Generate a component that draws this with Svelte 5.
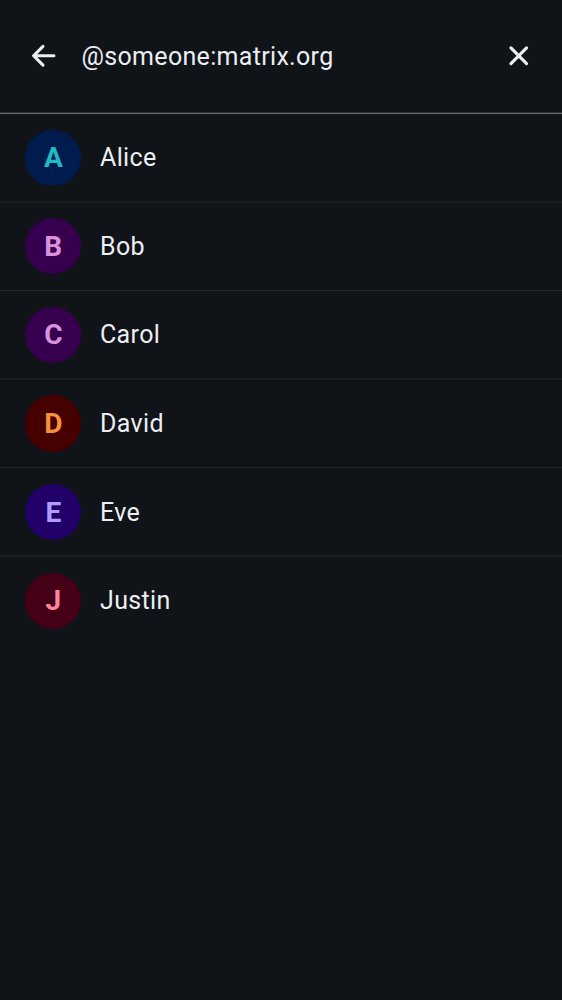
<script>
  const people = [
    { name: 'Alice', bg: '#001b4e', fg: '#20bac7' },
    { name: 'Bob', bg: '#37004e', fg: '#d991de' },
    { name: 'Carol', bg: '#37004e', fg: '#d991de' },
    { name: 'David', bg: '#470000', fg: '#f6913d' },
    { name: 'Eve', bg: '#22006a', fg: '#ad9cfe' },
    { name: 'Justin', bg: '#450018', fg: '#ff849c' }
  ];
</script>

<main>
  <header>
    <button aria-label="Back">
      <svg width="37.5" height="37.5" viewBox="0 0 24 24"><path fill="currentColor" d="M12.207 5.293a1 1 0 0 1 0 1.414L7.914 11H18.5a1 1 0 1 1 0 2H7.914l4.293 4.293a1 1 0 0 1-1.414 1.414l-6-6a1 1 0 0 1 0-1.414l6-6a1 1 0 0 1 1.414 0Z" /></svg>
    </button>
    <span class="query">@someone:matrix.org</span>
    <button aria-label="Clear">
      <svg width="37.5" height="37.5" viewBox="0 0 24 24"><path fill="currentColor" d="M6.293 6.293a1 1 0 0 1 1.414 0L12 10.586l4.293-4.293a1 1 0 1 1 1.414 1.414L13.414 12l4.293 4.293a1 1 0 0 1-1.414 1.414L12 13.414l-4.293 4.293a1 1 0 0 1-1.414-1.414L10.586 12 6.293 7.707a1 1 0 0 1 0-1.414Z" /></svg>
    </button>
  </header>
  <ul>
    {#each people as p}
      <li>
        <span class="avatar" style="background:{p.bg};color:{p.fg}">{p.name[0]}</span>
        <span class="name">{p.name}</span>
      </li>
    {/each}
  </ul>
</main>

<style>
  :global(body) { background: #101317; }
  main { min-height: 1000px; background: #101317; color: #ebeef2; font-family: Roboto, sans-serif; }
  header { box-sizing: border-box; height: 114px; display: flex; align-items: center; padding: 0 25px; border-bottom: 1px solid #656c76; box-shadow: inset 0 -1px #2b2f34; }
  button { display: flex; padding: 0; border: 0; background: none; color: inherit; }
  svg { display: block; margin-bottom: 0.7px; }
  .query { flex: 1; margin-left: 19px; font-size: 25px; line-height: 36px; letter-spacing: 0.32px; }
  ul { margin: 0; padding: 0; list-style: none; }
  li { box-sizing: border-box; height: 88.6px; display: flex; align-items: center; gap: 18.8px; padding-left: 25px; border-bottom: 1px solid #23262b; }
  li:nth-child(odd) { padding-top: 1px; border-bottom: 2px solid #191c20; }
  li:last-child { border-bottom-color: transparent; }
  .avatar { box-sizing: border-box; width: 56.2px; height: 56.2px; padding: 1px 0 0 0.4px; border-radius: 50%; display: flex; align-items: center; justify-content: center; font: 700 28px/34px Roboto, sans-serif; }
  .name { padding-top: 1px; font-size: 25px; line-height: 36px; letter-spacing: 0.36px; }
</style>
